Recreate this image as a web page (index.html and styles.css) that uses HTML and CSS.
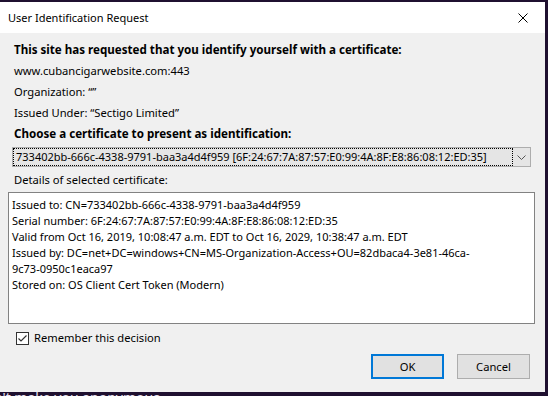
FILE: index.html
```html
<!DOCTYPE html>
<html lang="en">
<head>
  <meta charset="UTF-8" />
  <title>User Identification Request</title>
  <link rel="stylesheet" href="styles.css">
</head>
<body>
  <div class="screen">
    <div class="dialog">
      <!-- Title bar -->
      <div class="titlebar">
        <span class="title">User Identification Request</span>
        <button class="close-btn" title="Close">
          <svg width="10" height="10" viewBox="0 0 10 10">
            <path d="M0.5 0.5 L9.5 9.5 M9.5 0.5 L0.5 9.5" stroke="#000" stroke-width="1" fill="none" />
          </svg>
        </button>
      </div>

      <div class="content">
        <p class="line bold">This site has requested that you identify yourself with a certificate:</p>
        <p class="line">www.cubancigarwebsite.com:443</p>
        <p class="line">Organization: &ldquo;&rdquo;</p>
        <p class="line">Issued Under: &ldquo;Sectigo Limited&rdquo;</p>
        <p class="line bold">Choose a certificate to present as identification:</p>

        <div class="combo">
          <span class="combo-value">733402bb-666c-4338-9791-baa3a4d4f959 [6F:24:67:7A:87:57:E0:99:4A:8F:E8:86:08:12:ED:35]</span>
          <span class="combo-arrow">
            <svg width="9" height="5" viewBox="0 0 9 5">
              <path d="M0.5 0.5 L4.5 4.5 L8.5 0.5" stroke="#555" stroke-width="1" fill="none" />
            </svg>
          </span>
        </div>

        <div class="details-label">Details of selected certificate:</div>
        <div class="details">
          Issued to: CN=733402bb-666c-4338-9791-baa3a4d4f959<br>
          Serial number: 6F:24:67:7A:87:57:E0:99:4A:8F:E8:86:08:12:ED:35<br>
          Valid from Oct 16, 2019, 10:08:47 a.m. EDT to Oct 16, 2029, 10:38:47 a.m. EDT<br>
          Issued by: DC=net+DC=windows+CN=MS-Organization-Access+OU=82dbaca4-3e81-46ca-<br>
          9c73-0950c1eaca97<br>
          Stored on: OS Client Cert Token (Modern)
        </div>

        <label class="remember">
          <span class="checkbox">
            <svg width="11" height="11" viewBox="0 0 11 11">
              <path d="M1.5 5.5 L4 8 L9.5 2.5" stroke="#333" stroke-width="1.2" fill="none" />
            </svg>
          </span>
          Remember this decision
        </label>

        <div class="buttons">
          <button class="btn btn-default">OK</button>
          <button class="btn">Cancel</button>
        </div>
      </div>
    </div>
    <div class="behind">n't make you anonymous</div>
  </div>
</body>
</html>
```

FILE: styles.css
```css
body {
  margin: 0;
  background-color: #1f1030;
  font-family: "Noto Sans", "Open Sans", sans-serif;
  font-size: 11.2px;
  color: #000;
}

.screen {
  width: 548px;
  height: 396px;
  padding-top: 2px;
  box-sizing: border-box;
  overflow: hidden;
}

.dialog {
  width: 545px;
  height: 390px;
  background-color: #f0f0f0;
  display: flex;
  flex-direction: column;
}

/* Title bar */
.titlebar {
  height: 31px;
  background-color: #fff;
  display: flex;
  align-items: center;
  justify-content: space-between;
  padding-left: 8px;
  flex-shrink: 0;
}
.title {
  font-size: 11px;
}
.close-btn {
  width: 44px;
  height: 31px;
  border: none;
  background: none;
  padding: 0;
  display: flex;
  align-items: center;
  justify-content: center;
}

.content {
  padding: 6px 0 0 0;
}

.line {
  margin: 0;
  padding-left: 14px;
  line-height: 21px;
}
.bold {
  font-weight: bold;
  font-size: 11.6px;
}

/* Combo box */
.combo {
  margin: 3px 0 0 12px;
  width: 519px;
  height: 20px;
  box-sizing: border-box;
  border: 1px solid #adadad;
  background-color: #e5e5e5;
  display: flex;
  align-items: center;
}
.combo-value {
  flex-grow: 1;
  height: 18px;
  box-sizing: border-box;
  border: 1px dotted #000;
  line-height: 16px;
  padding-left: 2px;
  font-size: 11px;
  white-space: nowrap;
  overflow: hidden;
}
.combo-arrow {
  width: 17px;
  display: flex;
  justify-content: center;
}

.details-label {
  margin: 5px 0 0 14px;
  line-height: 16px;
}

.details {
  margin: 4px 0 0 8px;
  width: 527px;
  height: 132px;
  box-sizing: border-box;
  background-color: #fff;
  border: 1px solid #828282;
  padding: 4px 0 0 3px;
  line-height: 16px;
  font-size: 11px;
}

.remember {
  display: flex;
  align-items: center;
  gap: 5px;
  margin: 6px 0 0 16px;
  line-height: 16px;
}
.checkbox {
  width: 13px;
  height: 13px;
  box-sizing: border-box;
  border: 1px solid #333;
  background-color: #fff;
  display: flex;
  align-items: center;
  justify-content: center;
}

.buttons {
  display: flex;
  justify-content: flex-end;
  gap: 13px;
  margin: 8px 15px 0 0;
}
.btn {
  width: 73px;
  height: 25px;
  box-sizing: border-box;
  font-family: "Noto Sans", "Open Sans", sans-serif;
  font-size: 11.2px;
  background-color: #e1e1e1;
  border: 1px solid #adadad;
  padding: 0;
}
.btn-default {
  border: 2px solid #0078d7;
}

.behind {
  height: 4px;
  overflow: hidden;
  color: #e8e0f0;
  font-size: 14px;
  line-height: 4px;
  padding-top: 4px;
  white-space: nowrap;
  text-indent: -6px;
}
```
